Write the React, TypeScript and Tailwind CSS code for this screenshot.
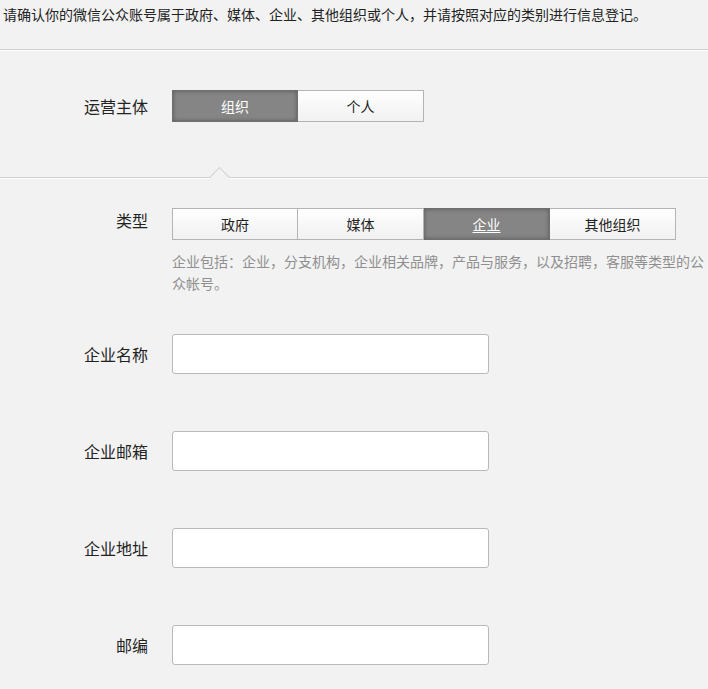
import { useState } from 'react'

const fields = ['企业名称', '企业邮箱', '企业地址', '邮编']
const types = ['政府', '媒体', '企业', '其他组织']

function SegButton({ label, active, first, underline }: { label: string; active: boolean; first?: boolean; underline?: boolean }) {
  return (
    <button
      className={`w-[126px] h-[32px] text-[14px] border-y ${first ? 'border-x' : 'border-r'} ${
        active
          ? 'bg-[#858585] border-[#6f6f6f] text-white shadow-[inset_0_0_4px_rgba(0,0,0,0.35)]'
          : 'bg-gradient-to-b from-white to-[#f1f1f1] border-[#b4b4b4] text-[#222]'
      } ${underline ? 'underline underline-offset-2' : ''}`}
    >
      {label}
    </button>
  )
}

export default function App() {
  const [owner, setOwner] = useState(0)
  const [kind, setKind] = useState(2)

  return (
    <div className='min-h-[689px] w-[708px] bg-[#f2f2f2] text-[#222] font-["Noto_Sans_CJK_SC",sans-serif]'>
      {/* intro */}
      <div className="h-[50px] border-b border-[#cfcfcf] shadow-[0_1px_0_#fff]">
        <p className="pl-[3px] text-[14px] leading-[28px]">
          请确认你的微信公众账号属于政府、媒体、企业、其他组织或个人，并请按照对应的类别进行信息登记。
        </p>
      </div>

      {/* 运营主体 */}
      <div className="relative pt-[40px] pb-[55px] border-b border-[#cfcfcf] shadow-[0_1px_0_#fff]">
        <div className="flex items-center">
          <label className="w-[148px] text-right text-[16px] leading-[32px]">运营主体</label>
          <div className="ml-[24px] flex">
            {['组织', '个人'].map((l, i) => (
              <div key={l} onClick={() => setOwner(i)}>
                <SegButton label={l} active={owner === i} first={i === 0} />
              </div>
            ))}
          </div>
        </div>
        {/* notch */}
        <div className="absolute left-[212px] bottom-[-8px] w-[15px] h-[15px] rotate-45 bg-[#f2f2f2] border-t border-l border-[#cfcfcf]" />
      </div>

      {/* 类型 */}
      <div className="pt-[30px]">
        <div className="flex items-start">
          <label className="w-[148px] text-right text-[16px] leading-[24px]">类型</label>
          <div className="ml-[24px]">
            <div className="flex">
              {types.map((t, i) => (
                <div key={t} onClick={() => setKind(i)}>
                  <SegButton label={t} active={kind === i} first={i === 0} underline={kind === i} />
                </div>
              ))}
            </div>
            <p className="mt-[10px] w-[536px] text-[14px] leading-[22px] text-[#8f8f8f]">
              企业包括：企业，分支机构，企业相关品牌，产品与服务，以及招聘，客服等类型的公众帐号。
            </p>
          </div>
        </div>

        <div className="mt-[40px] flex flex-col gap-[57px]">
          {fields.map((f) => (
            <div key={f} className="flex items-center">
              <label className="w-[148px] text-right text-[16px] leading-[24px]">{f}</label>
              <input
                type="text"
                className="ml-[24px] w-[317px] h-[40px] rounded-[3px] border border-[#b9b9b9] bg-white px-2 text-[14px] outline-none"
              />
            </div>
          ))}
        </div>
      </div>
    </div>
  )
}
